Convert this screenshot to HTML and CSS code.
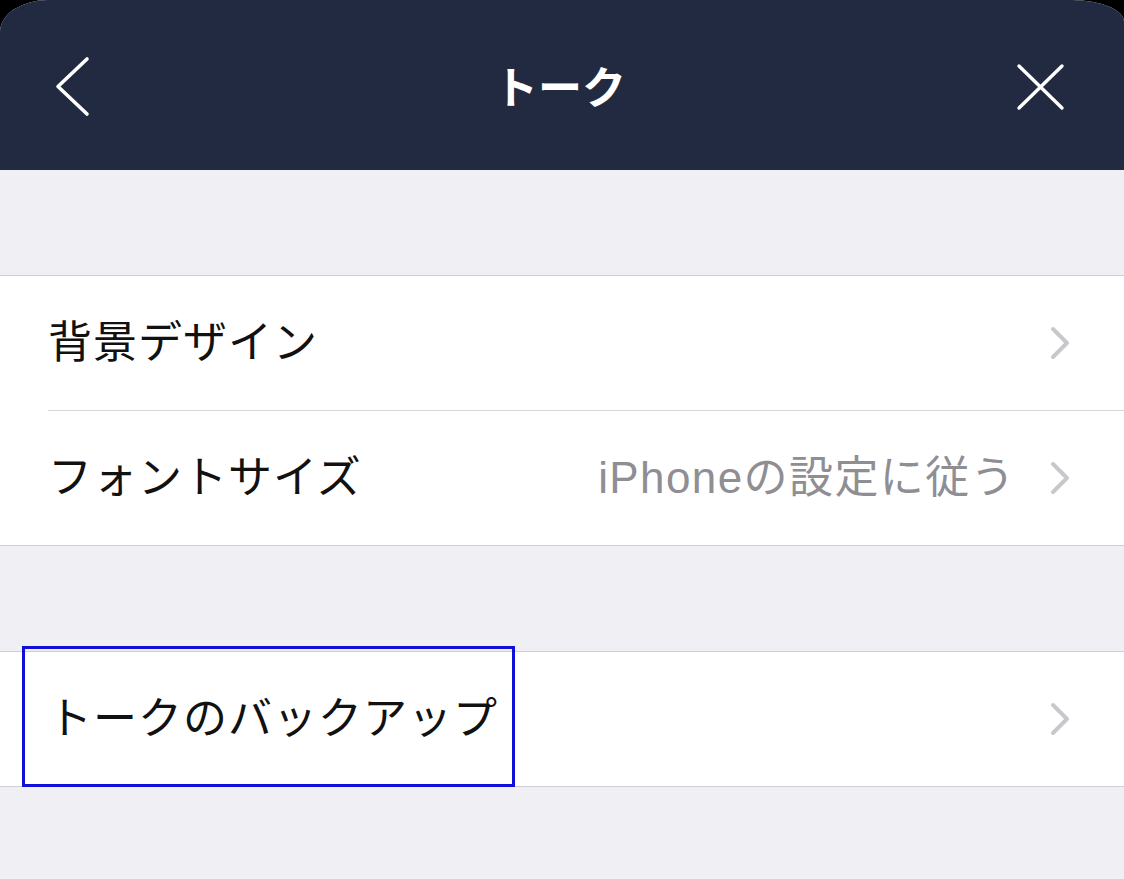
FILE: index.html
```html
<!DOCTYPE html>
<html lang="ja">
<head>
<meta charset="utf-8">
<title>トーク</title>
<link rel="stylesheet" href="styles.css">
</head>
<body>
<div class="screen">
  <header class="navbar">
    <svg class="nav-back" width="38" height="62" viewBox="0 0 38 62" aria-hidden="true">
      <polyline points="33,3 4,30.5 33,58" fill="none" stroke="#fff" stroke-width="3.6" stroke-linecap="round" stroke-linejoin="round"/>
    </svg>
    <h1 class="nav-title">トーク</h1>
    <svg class="nav-close" width="50" height="50" viewBox="0 0 50 50" aria-hidden="true">
      <line x1="3" y1="4" x2="46" y2="46" stroke="#fff" stroke-width="3.4" stroke-linecap="round"/>
      <line x1="46" y1="4" x2="3" y2="46" stroke="#fff" stroke-width="3.4" stroke-linecap="round"/>
    </svg>
  </header>

  <section class="group group-first">
    <div class="row">
      <div class="row-body">
        <span class="row-label">背景デザイン</span>
        <svg class="chevron" width="22" height="34" viewBox="0 0 22 34" aria-hidden="true">
          <polyline points="4,3 18,17 4,31" fill="none" stroke="#c7c7cc" stroke-width="4" stroke-linecap="round" stroke-linejoin="round"/>
        </svg>
      </div>
    </div>
    <div class="row">
      <div class="row-body">
        <span class="row-label">フォントサイズ</span>
        <span class="row-value">iPhoneの設定に従う</span>
        <svg class="chevron" width="22" height="34" viewBox="0 0 22 34" aria-hidden="true">
          <polyline points="4,3 18,17 4,31" fill="none" stroke="#c7c7cc" stroke-width="4" stroke-linecap="round" stroke-linejoin="round"/>
        </svg>
      </div>
    </div>
  </section>

  <section class="group group-second">
    <div class="row">
      <div class="row-body">
        <span class="row-label">トークのバックアップ</span>
        <svg class="chevron" width="22" height="34" viewBox="0 0 22 34" aria-hidden="true">
          <polyline points="4,3 18,17 4,31" fill="none" stroke="#c7c7cc" stroke-width="4" stroke-linecap="round" stroke-linejoin="round"/>
        </svg>
      </div>
    </div>
    <div class="highlight"></div>
  </section>
</div>
</body>
</html>
```

FILE: styles.css
```css
* {
  box-sizing: border-box;
}

html, body {
  margin: 0;
  padding: 0;
  background: #000;
}

body {
  width: 1124px;
  height: 879px;
  overflow: hidden;
  font-family: "Liberation Sans", "Noto Sans CJK JP", sans-serif;
}

.screen {
  width: 1124px;
  height: 879px;
  background: #efeff4;
  border-top-left-radius: 48px 32px;
  border-top-right-radius: 52px 22px;
  overflow: hidden;
}

.navbar {
  height: 170px;
  background: #222a42;
  display: grid;
  grid-template-columns: 1fr auto 1fr;
  align-items: center;
  padding: 0 58px 0 54px;
}

.nav-back {
  justify-self: start;
  margin-top: 4px;
}

.nav-close {
  justify-self: end;
  margin-top: 4px;
}

.nav-title {
  margin: 0;
  color: #fff;
  font-family: "Noto Sans CJK JP", sans-serif;
  font-weight: 700;
  font-size: 44px;
  line-height: 1;
  letter-spacing: 0;
}

.group {
  background: #fff;
  border-top: 1px solid #cfcfd3;
  border-bottom: 1px solid #cfcfd3;
}

.group-first {
  margin-top: 105px;
}

.group-second {
  margin-top: 105px;
  position: relative;
}

.row {
  padding-left: 48px;
}

.row-body {
  height: 134px;
  display: flex;
  align-items: center;
  padding-right: 53px;
}

.row + .row .row-body {
  border-top: 1px solid #d6d6da;
  height: 135px;
}

.row-label {
  flex: 1;
  font-size: 44px;
  line-height: 1;
  color: #111;
  letter-spacing: 1px;
}

.row-value {
  font-size: 44px;
  line-height: 1;
  color: #8e8e93;
  letter-spacing: 1.4px;
  margin-right: 33px;
}

.chevron {
  flex: none;
}

.highlight {
  position: absolute;
  left: 22px;
  top: -6px;
  width: 493px;
  height: 141px;
  border: 3px solid #1010d8;
  pointer-events: none;
}
```
